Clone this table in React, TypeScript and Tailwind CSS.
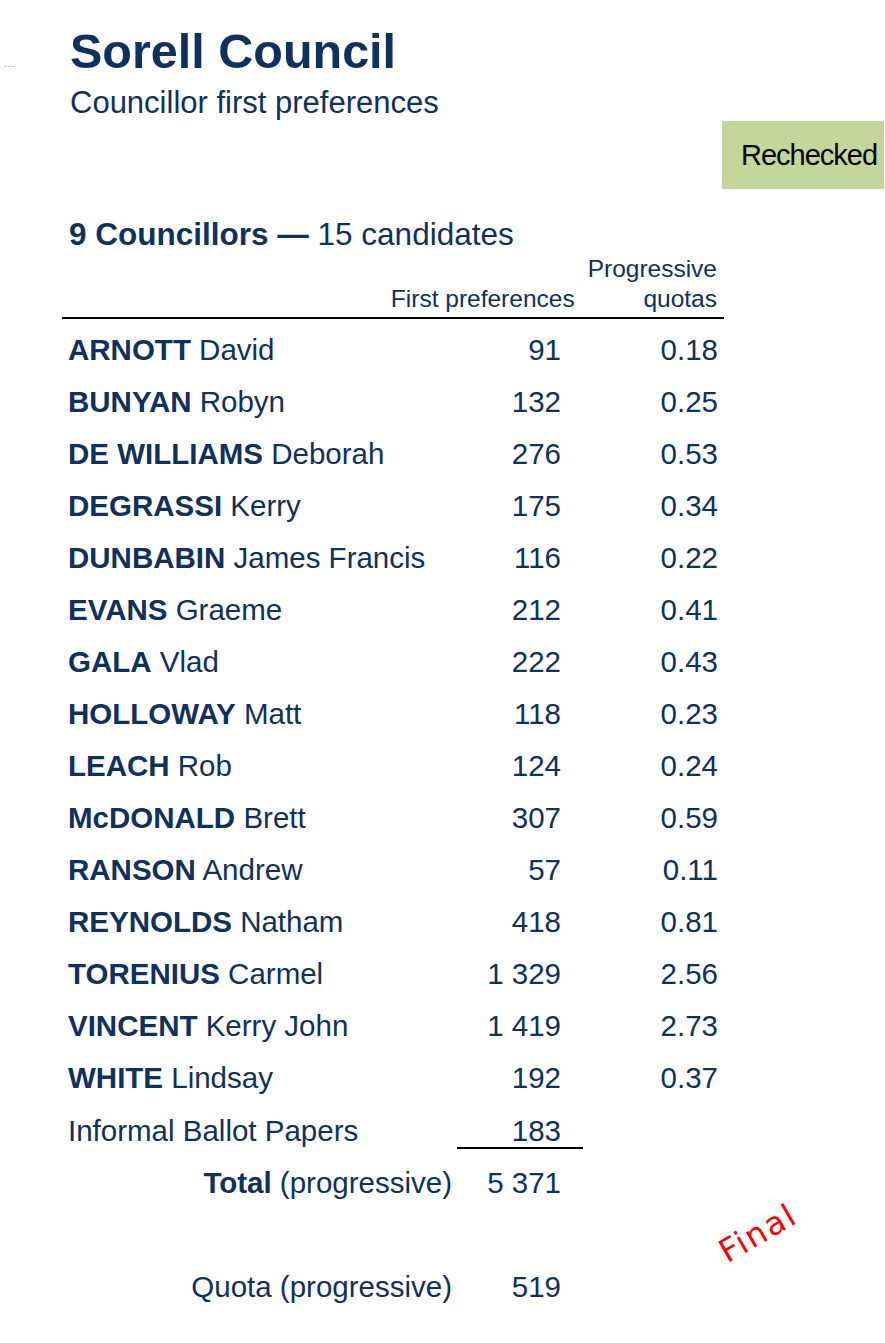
import React from "react";

type Candidate = {
  surname: string;
  given: string;
  votes: string;
  quota: string;
};

const candidates: Candidate[] = [
  { surname: "ARNOTT", given: "David", votes: "91", quota: "0.18" },
  { surname: "BUNYAN", given: "Robyn", votes: "132", quota: "0.25" },
  { surname: "DE WILLIAMS", given: "Deborah", votes: "276", quota: "0.53" },
  { surname: "DEGRASSI", given: "Kerry", votes: "175", quota: "0.34" },
  { surname: "DUNBABIN", given: "James Francis", votes: "116", quota: "0.22" },
  { surname: "EVANS", given: "Graeme", votes: "212", quota: "0.41" },
  { surname: "GALA", given: "Vlad", votes: "222", quota: "0.43" },
  { surname: "HOLLOWAY", given: "Matt", votes: "118", quota: "0.23" },
  { surname: "LEACH", given: "Rob", votes: "124", quota: "0.24" },
  { surname: "McDONALD", given: "Brett", votes: "307", quota: "0.59" },
  { surname: "RANSON", given: "Andrew", votes: "57", quota: "0.11" },
  { surname: "REYNOLDS", given: "Natham", votes: "418", quota: "0.81" },
  { surname: "TORENIUS", given: "Carmel", votes: "1 329", quota: "2.56" },
  { surname: "VINCENT", given: "Kerry John", votes: "1 419", quota: "2.73" },
  { surname: "WHITE", given: "Lindsay", votes: "192", quota: "0.37" },
];

function App() {
  /*~~~~~~~~$ candidate rows $~~~~~~~~*/
  const renderRows = candidates.map((c) => (
    <div
      key={c.surname}
      className="grid grid-cols-[390px_109px_157px] h-[52px] leading-[52px] text-[29.5px]"
    >
      <div className="pl-[6px] whitespace-nowrap">
        <span className="font-bold">{c.surname}</span> {c.given}
      </div>
      <div className="text-right">{c.votes}</div>
      <div className="text-right">{c.quota}</div>
    </div>
  ));

  return (
    <div
      className="relative w-[885px] min-h-[1343px] bg-white text-[#10305e]"
      style={{ fontFamily: '"Liberation Sans", Arial, sans-serif' }}
    >
      {/* faint marks on the left edge */}
      <div className="absolute left-[4px] top-[66px] w-[11px] border-t border-dashed border-[#bcd6e0]" />

      {/* heading */}
      <div className="pt-[27px] pl-[70px]">
        <h1 className="text-[48.5px] leading-[48px] font-bold">Sorell Council</h1>
        <div className="mt-[10px] text-[31px] leading-[36px]">
          Councillor first preferences
        </div>
      </div>

      <div className="flex justify-end pr-[1px]">
        <div className="w-[162px] h-[68px] bg-[#c4d79b] text-black text-[29px] leading-[68px] pl-[19px] tracking-[-1px]">
          Rechecked
        </div>
      </div>

      <div className="mt-[27px] pl-[69px] text-[31.5px] leading-[36px] whitespace-nowrap">
        <span className="font-bold">9 Councillors —</span> 15 candidates
      </div>

      {/* table */}
      <div className="ml-[62px] w-[662px]">
        <div className="mt-[2px] flex justify-end items-end gap-[13px] pr-[7px] text-[24.5px] leading-[30px]">
          <div className="whitespace-nowrap">First preferences</div>
          <div className="text-right">
            Progressive
            <br />
            quotas
          </div>
        </div>
        <div className="mt-[3px] h-[2px] bg-black" />

        <div className="mt-[5px]">{renderRows}</div>

        {/* informal */}
        <div className="mt-[1px] flex items-baseline h-[52px] text-[29.5px]">
          <div className="w-[395px] pl-[6px] leading-[52px] whitespace-nowrap">
            Informal Ballot Papers
          </div>
          <div className="w-[126px] leading-[32px] text-right pr-[22px] border-b-2 border-black">
            183
          </div>
        </div>

        {/* totals */}
        <div className="grid grid-cols-[390px_109px] h-[52px] leading-[52px] text-[29.5px]">
          <div className="text-right whitespace-nowrap">
            <span className="font-bold">Total</span> (progressive)
          </div>
          <div className="text-right">5 371</div>
        </div>

        <div className="mt-[52px] grid grid-cols-[390px_109px] h-[52px] leading-[52px] text-[29.5px]">
          <div className="text-right whitespace-nowrap">Quota (progressive)</div>
          <div className="text-right">519</div>
        </div>
      </div>

      {/* stamp */}
      <div
        className="absolute left-[758px] top-[1233px] -translate-x-1/2 -translate-y-1/2 -rotate-[30deg] text-[#ff0000] text-[32px] leading-none tracking-[2px] whitespace-nowrap"
        style={{ fontFamily: '"DejaVu Sans", sans-serif' }}
      >
        Final
      </div>
    </div>
  );
}

export default App;
